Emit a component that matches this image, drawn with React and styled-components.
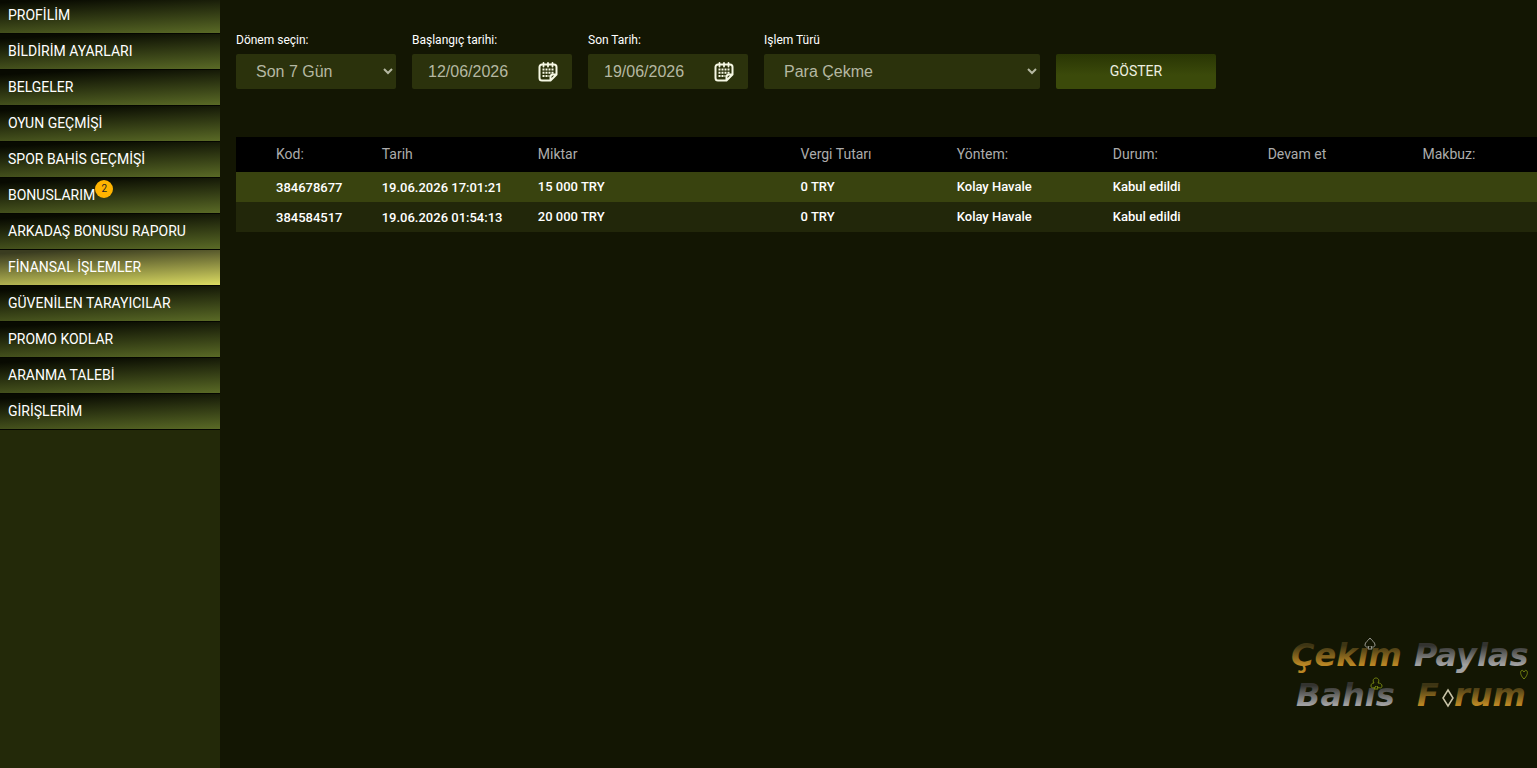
import React from 'react';
import styled, { createGlobalStyle, css } from 'styled-components';

const GlobalStyle = createGlobalStyle`
    * {
        box-sizing: border-box;
    }

    body {
        margin: 0;
        background: #131603;
        color: #fff;
        font-family: Roboto, sans-serif;
        overflow-x: hidden;
    }
`;

const Page = styled.div`
    display: flex;
    height: 100vh;
    overflow: hidden;
`;

const Sidebar = styled.nav`
    flex: 0 0 220px;
    background: #232909;
`;

const Menu = styled.ul`
    margin: -2px 0 0;
    padding: 0;
    list-style: none;
`;

const MenuLink = styled.a`
    display: flex;
    align-items: center;
    height: 36px;
    padding: 0 8px 2px;
    border-bottom: solid 1px #050600;
    background: linear-gradient(177deg, #080a01 10%, #5a6a26 100%);
    color: #fff;
    font-size: 14px;
    line-height: 16px;
    text-decoration: none;

    ${({ $active }) =>
        $active &&
        css`
            background: linear-gradient(177deg, #3a3c20 8%, #dcdc62 100%);
        `}
`;

const MenuLabel = styled.span`
    position: relative;
`;

const Badge = styled.span`
    position: absolute;
    left: 100%;
    top: -7px;
    width: 18px;
    height: 18px;
    border-radius: 50%;
    background: #ffb400;
    color: #222;
    font-size: 10px;
    line-height: 18px;
    text-align: center;
`;

const Main = styled.main`
    flex: 1;
    min-width: 0;
    display: flex;
    flex-direction: column;
    padding: 32px 0 48px 16px;
`;

const Filters = styled.form`
    display: flex;
    align-items: flex-end;
    gap: 16px;
    margin-bottom: 48px;
`;

const Field = styled.div`
    width: ${({ $wide }) => ($wide ? '276px' : '160px')};

    label {
        display: block;
        margin-bottom: 6px;
        font-size: 12px;
        line-height: 16px;
    }
`;

const Select = styled.select`
    display: block;
    width: 100%;
    height: 35px;
    padding: 0 0 0 16px;
    border: 0;
    border-radius: 2px;
    background: #2b320c;
    color: #b5b8a2;
    font-family: 'Liberation Sans', Arial, sans-serif;
    font-size: 16px;
`;

const DateBox = styled.div`
    display: flex;
    align-items: center;
    height: 35px;
    padding: 0 14px 0 16px;
    border-radius: 2px;
    background: #2b320c;

    input {
        flex: 1;
        min-width: 0;
        padding: 0;
        border: 0;
        background: none;
        color: #b5b8a2;
        font-family: 'Liberation Sans', Arial, sans-serif;
        font-size: 16px;
    }

    button {
        display: flex;
        padding: 0;
        border: 0;
        background: none;
        color: #f6f8e4;
    }
`;

const SubmitButton = styled.button`
    width: 160px;
    height: 35px;
    padding: 0 0 2px;
    border: 0;
    border-radius: 2px;
    background: linear-gradient(#293504, #3b4a0a 60%);
    color: #eef0e0;
    font-family: Roboto, sans-serif;
    font-size: 14px;
`;

const Table = styled.table`
    width: 100%;
    border-collapse: collapse;
    table-layout: fixed;

    th,
    td {
        padding: 0 0 2px;
        text-align: left;
        white-space: nowrap;

        &:first-child {
            padding-left: 40px;
        }
    }

    th {
        height: 35px;
        background: #000;
        color: #acacac;
        font-size: 14px;
        font-weight: 400;
    }

    td {
        height: 30px;
        font-size: 13px;
        font-weight: 500;
    }

    td:nth-child(-n + 2) {
        padding-bottom: 0;
    }

    tbody tr {
        background: #22270a;
    }

    tbody tr:nth-child(odd) {
        background: #39430f;
    }
`;

const HeadCell = styled.th`
    width: ${({ $width }) => $width};
`;

const Logo = styled.svg`
    align-self: flex-end;
    flex-shrink: 0;
    margin-top: auto;
    font-family: 'DejaVu Sans', sans-serif;
    font-size: 32px;
    font-weight: 700;
    font-style: italic;
`;

const MENU = [
    { title: 'PROFİLİM' },
    { title: 'BİLDİRİM AYARLARI' },
    { title: 'BELGELER' },
    { title: 'OYUN GEÇMİŞİ' },
    { title: 'SPOR BAHİS GEÇMİŞİ' },
    { title: 'BONUSLARIM', count: 2 },
    { title: 'ARKADAŞ BONUSU RAPORU' },
    { title: 'FİNANSAL İŞLEMLER', active: true },
    { title: 'GÜVENİLEN TARAYICILAR' },
    { title: 'PROMO KODLAR' },
    { title: 'ARANMA TALEBİ' },
    { title: 'GİRİŞLERİM' },
];

const COLUMNS = [
    { title: 'Kod:', width: '11.2%' },
    { title: 'Tarih', width: '12%' },
    { title: 'Miktar', width: '20.2%' },
    { title: 'Vergi Tutarı', width: '12%' },
    { title: 'Yöntem:', width: '12%' },
    { title: 'Durum:', width: '11.9%' },
    { title: 'Devam et', width: '11.9%' },
    { title: 'Makbuz:', width: '8.8%' },
];

const ROWS = [
    ['384678677', '19.06.2026 17:01:21', '15 000 TRY', '0 TRY', 'Kolay Havale', 'Kabul edildi', '', ''],
    ['384584517', '19.06.2026 01:54:13', '20 000 TRY', '0 TRY', 'Kolay Havale', 'Kabul edildi', '', ''],
];

const CalendarIcon = () => (
    <svg width="20" height="20" viewBox="0 0 20 20" fill="none" stroke="currentColor" aria-hidden="true">
        <path
            d="M12.5 18.5H4A2.5 2.5 0 0 1 1.5 16V5A2.500 2.500 0 0 1 4 2.500h12A2.500 2.500 0 0 1 18.500 5v7.500l-6 6V15a2.500 2.500 0 0 1 2.500-2.500h3.500"
            strokeWidth="2"
            strokeLinejoin="round"
        />
        <path d="M5.500 1v3.500M10 1v3.500M14.500 1v3.500" strokeWidth="1.800" strokeLinecap="round" />
        <path d="M4.500 7.500h11.500M4.500 10.700h11.500M4.500 14h7" strokeWidth="2" strokeDasharray="2 1" />
    </svg>
);

const DateField = ({ id, label, value }) => (
    <Field>
        <label htmlFor={id}>{label}</label>
        <DateBox>
            <input id={id} type="text" defaultValue={value} />
            <button type="button" aria-label={label}>
                <CalendarIcon />
            </button>
        </DateBox>
    </Field>
);

const SiteLogo = () => (
    <Logo width="248" height="84" viewBox="0 0 248 84" role="img" aria-label="Çekim Paylaş Bahis Forum">
        <defs>
            <linearGradient id="gold" x1="0" y1="0" x2="0" y2="1">
                <stop offset="0.25" stopColor="#3d3514" />
                <stop offset="0.75" stopColor="#b98624" />
            </linearGradient>
            <linearGradient id="silver" x1="0" y1="0" x2="0" y2="1">
                <stop offset="0.25" stopColor="#33332f" />
                <stop offset="0.75" stopColor="#a0a0a0" />
            </linearGradient>
        </defs>
        <text x="2" y="30" fill="url(#gold)">Çekım</text>
        <text x="125" y="30" fill="url(#silver)">Paylas</text>
        <text x="7" y="70" fill="url(#silver)">Bahıs</text>
        <text x="128" y="70" fill="url(#gold)">F</text>
        <text x="165" y="70" fill="url(#gold)">rum</text>
        <g fill="none">
            <path
                d="M81 2c2 3 5 4 5 7 0 2-3 3-4 1l1 3h-4l1-3c-1 2-4 1-4-1 0-3 3-4 5-7z"
                stroke="#9b9b91"
            />
            <path d="M235 43c-3-3-4-6-3-8 1-1 2-1 3 1 1-2 2-2 3-1 1 2 0 5-3 8z" stroke="#748411" />
            <path
                d="M87 50c-1 2-5 3-5 0 0-2 1-3 3-3-2-3 0-5 2-5s4 2 2 5c2 0 4 1 4 3 0 3-4 2-5 0l1 3h-4z"
                stroke="#748411"
            />
            <path d="M159 54l5 8-5 8-5-8z" stroke="#c9c4a8" strokeWidth="1.500" />
        </g>
    </Logo>
);

const App = () => (
    <>
        <GlobalStyle />
        <Page>
            <Sidebar>
                <Menu>
                    {MENU.map(({ title, count, active }) => (
                        <li key={title}>
                            <MenuLink href="#" $active={active}>
                                <MenuLabel>
                                    {title}
                                    {count && <Badge>{count}</Badge>}
                                </MenuLabel>
                            </MenuLink>
                        </li>
                    ))}
                </Menu>
            </Sidebar>
            <Main>
                <Filters onSubmit={e => e.preventDefault()}>
                    <Field>
                        <label htmlFor="period">Dönem seçin:</label>
                        <Select id="period">
                            <option>Son 7 Gün</option>
                        </Select>
                    </Field>
                    <DateField id="from" label="Başlangıç tarihi:" value="12/06/2026" />
                    <DateField id="to" label="Son Tarih:" value="19/06/2026" />
                    <Field $wide>
                        <label htmlFor="type">Işlem Türü</label>
                        <Select id="type">
                            <option>Para Çekme</option>
                        </Select>
                    </Field>
                    <SubmitButton type="submit">GÖSTER</SubmitButton>
                </Filters>
                <Table>
                    <thead>
                        <tr>
                            {COLUMNS.map(({ title, width }) => (
                                <HeadCell key={title} $width={width}>
                                    {title}
                                </HeadCell>
                            ))}
                        </tr>
                    </thead>
                    <tbody>
                        {ROWS.map(row => (
                            <tr key={row[0]}>
                                {row.map((cell, i) => (
                                    <td key={COLUMNS[i].title}>{cell}</td>
                                ))}
                            </tr>
                        ))}
                    </tbody>
                </Table>
                <SiteLogo />
            </Main>
        </Page>
    </>
);

export default App;
